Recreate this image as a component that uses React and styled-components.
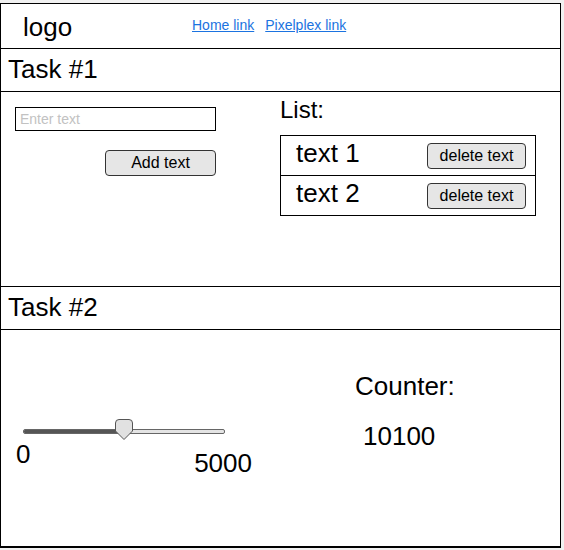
import React, { useState } from "react"
import styled, { createGlobalStyle } from "styled-components"

const GlobalStyle = createGlobalStyle`
  body {
    margin: 0;
    background: #f1f1f1;
    font-family: "Liberation Sans", Arial, sans-serif;
    color: #000;
  }
`

const Frame = styled.div`
  box-sizing: border-box;
  width: 561px;
  height: 545px;
  margin-top: 3px;
  background: #fff;
  border: 1px solid #000;
  border-bottom-width: 2px;
  display: flex;
  flex-direction: column;
`

const Header = styled.header`
  height: 44px;
  border-bottom: 1px solid #000;
  display: flex;
  align-items: center;
  padding-left: 22px;
`

const Logo = styled.div`
  font-size: 26px;
  width: 169px;
  margin-top: 2px;
`

const Nav = styled.nav`
  display: flex;
  gap: 11px;
  margin-bottom: 2px;
  a {
    font-size: 14px;
    color: #1b73e0;
    text-decoration: underline;
  }
`

const TaskTitle = styled.h2`
  margin: 0;
  height: 42px;
  border-bottom: 1px solid #000;
  font-size: 26px;
  font-weight: 400;
  line-height: 41px;
  padding-left: 7px;
`

const Task1Body = styled.section`
  height: 194px;
  border-bottom: 1px solid #000;
  display: flex;
`

const FormCol = styled.div`
  width: 201px;
  padding: 15px 0 0 14px;
  display: flex;
  flex-direction: column;
  align-items: flex-end;
`

const TextInput = styled.input`
  box-sizing: border-box;
  width: 201px;
  height: 24px;
  border: 1px solid #000;
  padding: 0 4px;
  font-family: inherit;
  font-size: 14px;
  outline: none;
  &::placeholder {
    color: #c2c2c2;
  }
`

const Button = styled.button`
  box-sizing: border-box;
  width: ${(p) => p.$w}px;
  height: ${(p) => p.$h}px;
  background: #e6e6e6;
  border: 1px solid #333;
  border-radius: 4px;
  font-family: inherit;
  font-size: 16px;
  color: #000;
  padding: 0;
`

const AddButton = styled(Button)`
  margin-top: 19px;
`

const ListCol = styled.div`
  margin-left: 64px;
  padding-top: 4px;
`

const ListLabel = styled.div`
  font-size: 24px;
  line-height: 28px;
  margin-bottom: 11px;
`

const ListBox = styled.ul`
  list-style: none;
  margin: 0;
  padding: 0;
  box-sizing: border-box;
  width: 256px;
  border: 1px solid #000;
`

const ListRow = styled.li`
  height: 39px;
  display: flex;
  align-items: center;
  justify-content: space-between;
  padding: 0 9px 0 15px;
  & + & {
    border-top: 1px solid #000;
  }
  span {
    font-size: 26px;
    margin-top: -4px;
  }
`

const Task2Body = styled.section`
  flex: 1;
  display: flex;
`

const SliderCol = styled.div`
  width: 241px;
  padding: 91px 0 0 15px;
`

const Slider = styled.div`
  position: relative;
  width: 202px;
  height: 20px;
  margin-left: 7px;
  display: flex;
  align-items: center;
`

const Track = styled.div`
  box-sizing: border-box;
  flex: 1;
  height: 5px;
  border: 1px solid #666;
  border-radius: 2px;
  background: #e4e4e4;
  overflow: hidden;
`

const Fill = styled.div`
  height: 100%;
  background: #555;
`

const Thumb = styled.svg`
  position: absolute;
  top: -2px;
  margin-left: -9px;
`

const SliderLabels = styled.div`
  display: flex;
  justify-content: space-between;
  align-items: flex-start;
  width: 236px;
  font-size: 26px;
  line-height: 30px;
  margin-top: -2px;
  span:last-child {
    margin-top: 9px;
  }
`

const CounterCol = styled.div`
  margin-left: 98px;
  padding-top: 41px;
  font-size: 26px;
  line-height: 30px;
`

const CounterValue = styled.div`
  margin-top: 20px;
  padding-left: 8px;
`

const App = () => {
  const [items] = useState(["text 1", "text 2"])
  const value = 2500
  const max = 5000
  const pct = (value / max) * 100

  return (
    <>
      <GlobalStyle />
      <Frame>
        <Header>
          <Logo>logo</Logo>
          <Nav>
            <a href="#home">Home link</a>
            <a href="#pixelplex">Pixelplex link</a>
          </Nav>
        </Header>

        <TaskTitle>Task #1</TaskTitle>
        <Task1Body>
          <FormCol>
            <TextInput placeholder="Enter text" />
            <AddButton $w={111} $h={26}>Add text</AddButton>
          </FormCol>
          <ListCol>
            <ListLabel>List:</ListLabel>
            <ListBox>
              {items.map((t) => (
                <ListRow key={t}>
                  <span>{t}</span>
                  <Button $w={99} $h={26}>delete text</Button>
                </ListRow>
              ))}
            </ListBox>
          </ListCol>
        </Task1Body>

        <TaskTitle>Task #2</TaskTitle>
        <Task2Body>
          <SliderCol>
            <Slider>
              <Track>
                <Fill style={{ width: `${pct}%` }} />
              </Track>
              <Thumb style={{ left: `${pct}%` }} width="18" height="21" viewBox="0 0 18 21">
                <path
                  d="M4 0.5 H14 Q17.5 0.5 17.5 4 V12 L9 20.5 L0.5 12 V4 Q0.5 0.5 4 0.5 Z"
                  fill="#e1e1e1"
                  stroke="#555"
                  strokeWidth="1"
                />
              </Thumb>
            </Slider>
            <SliderLabels>
              <span>0</span>
              <span>{max}</span>
            </SliderLabels>
          </SliderCol>
          <CounterCol>
            <div>Counter:</div>
            <CounterValue>10100</CounterValue>
          </CounterCol>
        </Task2Body>
      </Frame>
    </>
  )
}

export default App
